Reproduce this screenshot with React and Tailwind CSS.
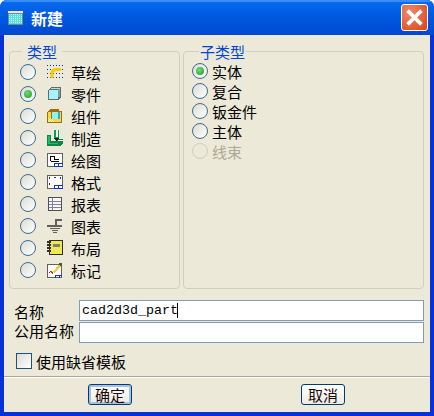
import { useState } from 'react';

const FONT = "font-['Noto_Sans_CJK_SC','Noto_Sans_CJK_JP',sans-serif]";

const SketchIcon = () => (
  <svg width="16" height="16" viewBox="0 0 16 16" shapeRendering="crispEdges">
    <path d="M0 1.5h16M0 5.5h16M0 9.5h16M0 13.5h16" stroke="#1a2ab0" strokeDasharray="1 2" fill="none" />
    <path d="M5 14V9.5q0-4 5-4h4" stroke="#f4cc00" strokeWidth="3" fill="none" shapeRendering="auto" />
  </svg>
);

const PartIcon = () => (
  <svg width="16" height="16" viewBox="0 0 16 16" shapeRendering="crispEdges">
    <path d="M1 4l3-3h10v10l-3 3H1z" fill="#5f6e6e" />
    <rect x="2" y="4" width="9" height="9" fill="#a4f4fc" />
    <path d="M4 2h9v1H4z" fill="#c8d4d4" />
    <rect x="11" y="3" width="2" height="8" fill="#8a9a9a" />
  </svg>
);

const AssemblyIcon = () => (
  <svg width="16" height="16" viewBox="0 0 16 16" shapeRendering="crispEdges">
    <path d="M0 4l3-3h9v2h3v11l-1 1H0z" fill="#a06c10" />
    <rect x="1" y="4" width="13" height="10" fill="#f8d840" />
    <path d="M1 10h1M3 10h1M2 11h1M4 11h1M1 12h1M3 12h1M5 12h1M2 13h1M4 13h1M6 13h1" stroke="#fff8c0" />
    <rect x="5" y="4" width="8" height="7" fill="#90f0f8" />
    <rect x="11" y="4" width="2" height="7" fill="#40a8b0" />
    <rect x="4" y="3" width="1" height="8" fill="#a06c10" />
  </svg>
);

const MfgIcon = () => (
  <svg width="16" height="16" viewBox="0 0 16 16" shapeRendering="crispEdges">
    <path d="M0 5h4v6h4l2-2h6v4l-3 3H0z" fill="#0c8848" />
    <path d="M1 6h2v7h8v1H1z" fill="#28b868" />
    <rect x="7" y="0" width="5" height="8" fill="#109858" />
    <rect x="9" y="0" width="2" height="7" fill="#e8fff0" />
    <path d="M7 8h5l-2 3h-1z" fill="#202020" />
    <path d="M11 10h5v1h-5z" fill="#f4f4f4" />
  </svg>
);

const DrawingFrame = ({ children }) => (
  <svg width="16" height="16" viewBox="0 0 16 16" shapeRendering="crispEdges">
    <rect x="0.5" y="1.5" width="15" height="13" fill="#fff" stroke="#606060" strokeWidth="1" />
    {children}
    <path d="M7 11.5h8.5M7.5 12v3M11.5 12v3M7 14.5h9" stroke="#1030d0" fill="none" />
  </svg>
);

const ReportIcon = () => (
  <svg width="16" height="16" viewBox="0 0 16 16" shapeRendering="crispEdges">
    <rect x="1.5" y="1.5" width="13" height="13" fill="#f8f8f0" stroke="#505050" />
    <path d="M2 5.5h12M2 8.5h12M2 11.5h12M5.5 2v12" stroke="#8080a0" />
  </svg>
);

const GraphIcon = () => (
  <svg width="16" height="16" viewBox="0 0 16 16" shapeRendering="crispEdges">
    <path d="M15 1H8v6H0v2h15V7h-5V3h5zM3 10h10v1H3zM5 12h6v1H5zM6 14h4v1H6z" fill="#606060" />
  </svg>
);

const LayoutIcon = () => (
  <svg width="16" height="16" viewBox="0 0 16 16" shapeRendering="crispEdges">
    <rect x="2.5" y="0.5" width="13" height="14" fill="#f0e850" stroke="#303020" />
    <rect x="6" y="4" width="7" height="3" fill="#808070" />
    <path d="M0 2h4M0 5h4M0 8h4M0 11h4" stroke="#303020" strokeWidth="1.5" />
  </svg>
);

const MarkupIcon = () => (
  <svg width="16" height="16" viewBox="0 0 16 16" shapeRendering="crispEdges">
    <rect x="0.5" y="2.5" width="14" height="13" fill="#fff" stroke="#606060" />
    <path d="M2 11l2-2 2 3" stroke="#d03020" fill="none" />
    <path d="M6 10l6-8 2 2-6 7z" fill="#e8d040" />
    <path d="M12 1h3v3h-2z" fill="#505050" />
    <path d="M8 13.5h7M8.5 13v3M12.5 13v3" stroke="#1030d0" fill="none" />
  </svg>
);

const TYPES = [
  { label: '草绘', icon: <SketchIcon /> },
  { label: '零件', icon: <PartIcon /> },
  { label: '组件', icon: <AssemblyIcon /> },
  { label: '制造', icon: <MfgIcon /> },
  {
    label: '绘图',
    icon: (
      <DrawingFrame>
        <path d="M3.5 9V4.5h4v3h4.5M3.5 9.5h8" stroke="#000" fill="none" />
      </DrawingFrame>
    ),
  },
  {
    label: '格式',
    icon: (
      <DrawingFrame>
        <path d="M2 3h1v2H2zM7 3h2v1H7zM13 3h1v2h-1zM2 9h1v2H2z" fill="#1030d0" />
      </DrawingFrame>
    ),
  },
  { label: '报表', icon: <ReportIcon /> },
  { label: '图表', icon: <GraphIcon /> },
  { label: '布局', icon: <LayoutIcon /> },
  { label: '标记', icon: <MarkupIcon /> },
];

const SUB_TYPES = ['实体', '复合', '钣金件', '主体', '线束'];

function Radio({ checked, disabled }) {
  return (
    <span
      className={
        disabled
          ? 'flex h-[16px] w-[16px] shrink-0 items-center justify-center rounded-full border border-[#d0cdbd] bg-[#ece9d8]'
          : 'flex h-[16px] w-[16px] shrink-0 items-center justify-center rounded-full border-[1.5px] border-[#3e6a94] bg-gradient-to-br from-[#dcdcd4] to-white'
      }
    >
      {checked && <span className="h-[8px] w-[8px] rounded-full bg-[radial-gradient(circle_at_40%_35%,#6fdc6f,#1f9a2f)]" />}
    </span>
  );
}

function GroupBox({ title, className, legendClass, children }) {
  return (
    <fieldset className={`rounded-[4px] border border-[#d0d0bf] ${className}`}>
      <legend className={`text-[15px] leading-[15px] text-[#0046d5] ${legendClass}`}>{title}</legend>
      {children}
    </fieldset>
  );
}

export default function App() {
  const [name, setName] = useState('cad2d3d_part');

  return (
    <div className={`flex h-[416px] w-[434px] flex-col overflow-hidden rounded-t-[7px] bg-[#0831d9] ${FONT}`}>
      {/* title bar */}
      <div className="flex h-[35px] shrink-0 items-center justify-between bg-gradient-to-b from-[#0a6cf0] via-[#0058e0] to-[#0048d0] pl-[8px] pr-[6px] shadow-[inset_0_2px_0_#3a8cf8]">
        <div className="flex items-center gap-[7px]">
          <svg width="16" height="16" viewBox="0 0 16 16" shapeRendering="crispEdges">
            <rect x="0" y="1" width="15" height="14" fill="#6d8a8a" />
            <rect x="1" y="4" width="13" height="10" fill="#58e0e0" />
            <path d="M1 4h13M1 6h13M1 8h13M1 10h13M1 12h13" stroke="#c8f8f8" strokeDasharray="1 1" />
            <rect x="0" y="1" width="15" height="2" fill="#e8e8e0" />
          </svg>
          <span className="text-[16px] font-bold leading-none text-white">新建</span>
        </div>
        <button className="flex h-[27px] w-[27px] items-center justify-center rounded-[3px] border border-white bg-[radial-gradient(circle_at_30%_30%,#ee8a68,#d8431c)]">
          <svg width="19" height="19" viewBox="0 0 18 18">
            <path d="M2.5 2.5l13 13M15.5 2.5l-13 13" stroke="#fff" strokeWidth="3.4" />
          </svg>
        </button>
      </div>

      {/* dialog body */}
      <div className="mx-[4px] mb-[4px] flex min-h-0 flex-1 flex-col bg-[#ece9d8]">
        <div className="flex gap-[3px] pl-[5px] pr-[6px] pt-[9px]">
          <GroupBox title="类型" className="h-[245px] w-[171px] pl-[10px]" legendClass="ml-[2px] px-[5px]">
            <ul className="mt-[2px] flex flex-col">
              {TYPES.map((t, i) => (
                <li key={t.label} className="flex h-[22px] items-center">
                  <Radio checked={i === 1} />
                  <span className="ml-[11px] flex w-[16px] justify-center">{t.icon}</span>
                  <span className="ml-[8px] text-[15px] leading-none text-black">{t.label}</span>
                </li>
              ))}
            </ul>
          </GroupBox>
          <GroupBox title="子类型" className="h-[245px] flex-1 pl-[8px]" legendClass="ml-[7px] px-[1px]">
            <ul className="mt-[2px] flex flex-col">
              {SUB_TYPES.map((t, i) => (
                <li key={t} className="flex h-[20px] items-center gap-[4px]">
                  <Radio checked={i === 0} disabled={i === 4} />
                  <span className={`text-[15px] leading-none ${i === 4 ? 'text-[#aca899]' : 'text-black'}`}>{t}</span>
                </li>
              ))}
            </ul>
          </GroupBox>
        </div>

        <div className="mt-[11px] flex flex-col gap-[1px] pl-[10px] pr-[6px]">
          <div className="flex h-[21px] items-center">
            <label className="w-[65px] pt-[2px] text-[15px] leading-none text-black">名称</label>
            <div className="relative flex-1">
              <input
                value={name}
                onChange={(e) => setName(e.target.value)}
                className="block h-[21px] w-full border border-[#7f9db9] bg-white px-[2px] font-['Liberation_Mono',monospace] text-[13.33px] text-black outline-none"
              />
              {/* caret */}
              <span className="absolute left-[98px] top-[3px] h-[15px] w-px bg-black" />
            </div>
          </div>
          <div className="flex h-[21px] items-center">
            <label className="w-[65px] pb-[4px] text-[15px] leading-none text-black">公用名称</label>
            <input className="h-[21px] flex-1 border border-[#7f9db9] bg-white px-[3px] outline-none" />
          </div>
        </div>

        <label className="ml-[12px] mt-[10px] flex h-[16px] items-center gap-[4px] text-[15px] leading-none text-black">
          <span className="h-[16px] w-[16px] border border-[#1c5180] bg-gradient-to-br from-[#dcdcd4] to-white" />
          使用缺省模板
        </label>

        <div className="mt-[7px] h-[2px] border-b border-white bg-[#aca899]" />

        <div className="flex pt-[6px]">
          <button className="ml-[84px] h-[21px] w-[44px] rounded-[3px] border border-[#003c74] bg-gradient-to-b from-white to-[#ecebe4] text-[15px] leading-none text-[#200808] shadow-[inset_0_0_0_2px_#a8c0e8]">
            确定
          </button>
          <button className="ml-[169px] h-[21px] w-[44px] rounded-[3px] border border-[#003c74] bg-gradient-to-b from-white to-[#ecebe4] text-[15px] leading-none text-[#200808]">
            取消
          </button>
        </div>
      </div>
    </div>
  );
}
